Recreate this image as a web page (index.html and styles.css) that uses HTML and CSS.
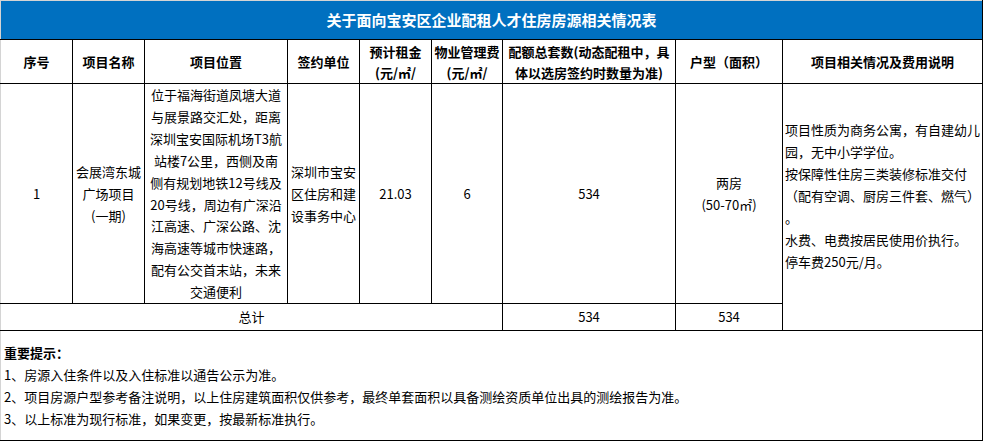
FILE: index.html
```html
<!DOCTYPE html>
<html lang="zh-CN">
<head>
<meta charset="utf-8">
<title>关于面向宝安区企业配租人才住房房源相关情况表</title>
<link rel="stylesheet" href="styles.css">
</head>
<body>
<table class="sheet">
  <colgroup>
    <col class="c1"><col class="c2"><col class="c3"><col class="c4"><col class="c5">
    <col class="c6"><col class="c7"><col class="c8"><col class="c9">
  </colgroup>
  <tr class="r-title">
    <td class="title" colspan="9">关于面向宝安区企业配租人才住房房源相关情况表</td>
  </tr>
  <tr class="r-head">
    <th>序号</th>
    <th>项目名称</th>
    <th>项目位置</th>
    <th>签约单位</th>
    <th><span class="hl">预计租金</span><span class="hl">(元/㎡/</span></th>
    <th><span class="hl">物业管理费</span><span class="hl">(元/㎡/</span></th>
    <th><span class="hl">配额总套数(动态配租中，具</span><span class="hl">体以选房签约时数量为准)</span></th>
    <th>户型（面积）</th>
    <th>项目相关情况及费用说明</th>
  </tr>
  <tr class="r-data">
    <td>1</td>
    <td><span class="ln">会展湾东城</span><span class="ln">广场项目</span><span class="ln">(一期)</span></td>
    <td class="loc"><span class="ln">位于福海街道凤塘大道</span><span class="ln">与展景路交汇处，距离</span><span class="ln">深圳宝安国际机场T3航</span><span class="ln">站楼7公里，西侧及南</span><span class="ln">侧有规划地铁12号线及</span><span class="ln">20号线，周边有广深沿</span><span class="ln">江高速、广深公路、沈</span><span class="ln">海高速等城市快速路，</span><span class="ln">配有公交首末站，未来</span><span class="ln">交通便利</span></td>
    <td><span class="ln">深圳市宝安</span><span class="ln">区住房和建</span><span class="ln">设事务中心</span></td>
    <td>21.03</td>
    <td>6</td>
    <td>534</td>
    <td><span class="ln">两房</span><span class="ln">(50-70㎡)</span></td>
    <td class="desc" rowspan="2"><span class="ln">项目性质为商务公寓，有自建幼儿</span><span class="ln">园，无中小学学位。</span><span class="ln">按保障性住房三类装修标准交付</span><span class="ln">（配有空调、厨房三件套、燃气）</span><span class="ln">。</span><span class="ln">水费、电费按居民使用价执行。</span><span class="ln">停车费250元/月。</span></td>
  </tr>
  <tr class="r-total">
    <td colspan="6">总计</td>
    <td>534</td>
    <td>534</td>
  </tr>
  <tr class="r-notes">
    <td class="notes" colspan="9">
      <span class="ln notes-head">重要提示：</span>
      <span class="ln">1、房源入住条件以及入住标准以通告公示为准。</span>
      <span class="ln">2、项目房源户型参考备注说明，以上住房建筑面积仅供参考，最终单套面积以具备测绘资质单位出具的测绘报告为准。</span>
      <span class="ln">3、以上标准为现行标准，如果变更，按最新标准执行。</span>
    </td>
  </tr>
</table>
</body>
</html>
```
FILE: styles.css
```css
html, body {
  margin: 0;
  padding: 0;
  background: #ffffff;
}

body {
  font-family: "Noto Sans CJK SC", "Noto Sans", sans-serif;
  font-size: 13px;
  color: #000000;
}

.sheet {
  border-collapse: collapse;
  table-layout: fixed;
  width: 983px;
  border-left: 1px solid #d4d4d4;
  border-top: 1px solid #d4d4d4;
}

.c1 { width: 72px; }
.c2 { width: 72px; }
.c3 { width: 143px; }
.c4 { width: 72px; }
.c5 { width: 72px; }
.c6 { width: 71px; }
.c7 { width: 173px; }
.c8 { width: 107px; }
.c9 { width: 200px; }

.sheet td,
.sheet th {
  border: 1px solid #000000;
  padding: 0;
  text-align: center;
  vertical-align: middle;
  line-height: 20px;
  white-space: nowrap;
  overflow: hidden;
}

.sheet th {
  font-weight: 700;
}

.ln {
  display: block;
  height: 22px;
  line-height: 22px;
  overflow: hidden;
}

.hl {
  display: block;
  height: 21px;
  line-height: 21px;
  overflow: hidden;
}

.loc .ln {
  height: 21.9px;
}

.sheet tr > :first-child {
  border-left-color: #d4d4d4;
}

.title {
  background: #0070c0;
  color: #ffffff;
  font-size: 15px;
  font-weight: 700;
  height: 38px;
  border-top-color: #d4d4d4 !important;
}

.r-head th { height: 43px; }
.r-data td { height: 219px; }
.r-total td { height: 26px; }

.r-data td.desc {
  height: auto;
  text-align: left;
  vertical-align: top;
  padding: 35px 0 0 2px;
}

.notes {
  text-align: left !important;
  height: 109px;
  padding-left: 3px !important;
}

.notes-head {
  font-weight: 700;
}
```
